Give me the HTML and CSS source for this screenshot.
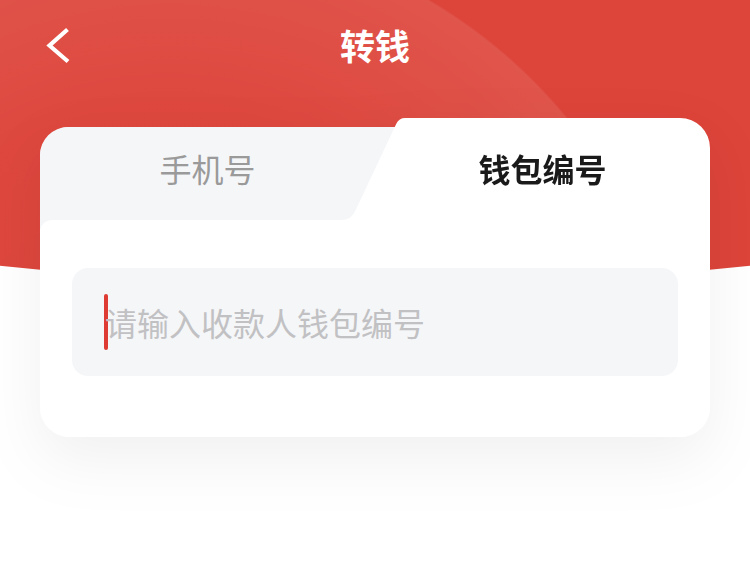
FILE: index.html
```html
<!DOCTYPE html>
<html lang="zh-CN">
<head>
<meta charset="utf-8">
<title>转钱</title>
<link rel="stylesheet" href="styles.css">
</head>
<body>
<header class="header">
  <nav class="nav">
    <div class="nav-side">
      <svg class="back" viewBox="0 0 26 40" width="26" height="40" aria-hidden="true">
        <polyline points="21.5,5.5 3.5,21.5 22,37.5" fill="none" stroke="#fff" stroke-width="4.2" stroke-linejoin="miter" stroke-linecap="butt"/>
      </svg>
    </div>
    <div class="title">转钱</div>
    <div class="nav-side"></div>
  </nav>
</header>
<main class="card">
  <div class="tabs">
    <div class="tab tab-left">手机号</div>
    <div class="tab tab-right">钱包编号</div>
  </div>
  <div class="card-body">
    <div class="input">
      <span class="cursor"></span>
      <span class="placeholder">请输入收款人钱包编号</span>
    </div>
  </div>
</main>
</body>
</html>
```
FILE: styles.css
```css
html, body {
  margin: 0;
  padding: 0;
  background: #ffffff;
}
body {
  font-family: "Noto Sans CJK SC", "Noto Sans", sans-serif;
  width: 750px;
  height: 562px;
  overflow: hidden;
}
.header {
  height: 285px;
  background-color: #dd443a;
  background-image: radial-gradient(circle at 170px 443px,
    rgba(255,255,255,0) 0,
    rgba(255,255,255,0.02) 330px,
    rgba(255,255,255,0.09) 512px,
    rgba(255,255,255,0) 514px);
  clip-path: ellipse(1000px 263px at 50% 22px);
}
.nav {
  height: 88px;
  display: grid;
  grid-template-columns: 1fr auto 1fr;
  align-items: center;
}
.nav-side {
  display: flex;
  align-items: center;
  padding-left: 46px;
}
.back {
  display: block;
}
.title {
  color: #ffffff;
  font-size: 35px;
  font-weight: 700;
  line-height: 1;
}
.card {
  display: block;
  position: relative;
  margin: -158px 40px 0;
  background: #ffffff;
  border-radius: 30px;
  filter: drop-shadow(0 22px 30px rgba(0, 0, 0, 0.06));
}
.card::before {
  content: "";
  position: absolute;
  top: -9px;
  left: 340px;
  width: 330px;
  height: 60px;
  background: #ffffff;
  clip-path: path("M 0 40.4 L 16.3 5.7 A 10 10 0 0 1 25.4 0 L 300 0 A 30 30 0 0 1 330 30 L 330 60 L 0 60 Z");
}
.tabs {
  display: flex;
  height: 93px;
  align-items: flex-start;
}
.tab {
  display: flex;
  align-items: center;
  justify-content: center;
  font-size: 32px;
  line-height: 1;
  box-sizing: border-box;
}
.tab-left {
  flex: none;
  width: 360px;
  height: 105px;
  padding: 0 25px 23px 0;
  background: #f5f6f8;
  color: #9a9a9a;
  clip-path: path("M 0 28 A 28 28 0 0 1 28 0 L 354.8 0 L 315 84.4 A 15 15 0 0 1 301.5 93 L 301.5 105 L 0 105 Z");
}
.tab-right {
  position: relative;
  flex: 1;
  height: 93px;
  padding-bottom: 11px;
  margin-left: -25px;
  color: #1a1a1a;
  font-weight: 700;
}
.card-body {
  position: relative;
  z-index: 1;
  background: #ffffff;
  border-radius: 12px 0 30px 30px;
  padding: 48px 32px 61px;
}
.input {
  height: 108px;
  background: #f5f6f8;
  border-radius: 16px;
  display: flex;
  align-items: center;
  padding-left: 32px;
}
.cursor {
  flex: none;
  width: 4px;
  height: 56px;
  border-radius: 2px;
  background: #dd3b33;
}
.placeholder {
  font-size: 32px;
  line-height: 1;
  color: #c1c1c3;
  margin-left: -3px;
}
```
